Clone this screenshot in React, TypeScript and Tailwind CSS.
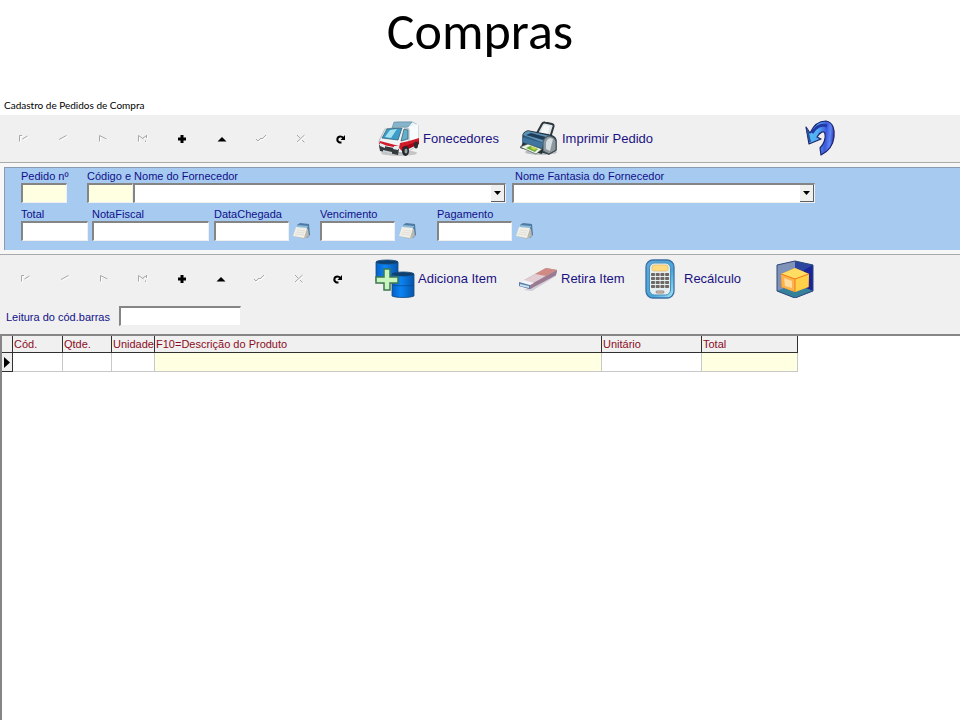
import type { ReactNode } from "react";

const navGlyphs: { name: string; enabled: boolean; art: ReactNode }[] = [
  { name: "Primeiro", enabled: false, art: <path d="M4.500 9.500V3.500H7M7.500 7l5-3" /> },
  { name: "Anterior", enabled: false, art: <path d="M5 7.500l7.500-4" /> },
  { name: "Próximo", enabled: false, art: <path d="M5.500 9.500V3.500l7 3.500" /> },
  { name: "Último", enabled: false, art: <path d="M4.500 9.500V3.500l5 3.500M12.500 3v3M9 6l3-2M11.500 8.500v1.500" /> },
  {
    name: "Inserir",
    enabled: true,
    art: <path d="M9 3v8M5 7h8" stroke="#000" strokeWidth="3" />,
  },
  { name: "Editar", enabled: true, art: <path d="M4.500 9.500L9 5l4.500 4.500z" fill="#000" stroke="none" /> },
  { name: "Gravar", enabled: false, art: <path d="M3 7l2 2 3-3 1 1 4-4" /> },
  { name: "Cancelar", enabled: false, art: <path d="M5 3l3 3M10 8l2.500 2.500M12.500 3L5 10" /> },
  {
    name: "Atualizar",
    enabled: true,
    art: (
      <g>
        <path d="M9.500 10.500H7.500C4 9 5 4.500 8.500 4.500c1.500 0 2.500.8 3 2" stroke="#000" strokeWidth="2" />
        <path d="M13 3v5H8.500z" fill="#000" stroke="none" />
      </g>
    ),
  },
];

function Navigator({ size, label }: { size: string; label: string }) {
  return (
    <div role="toolbar" aria-label={label} className={`grid shrink-0 grid-cols-9 ${size}`}>
      {navGlyphs.map((g) => (
        <button
          key={g.name}
          type="button"
          aria-label={g.name}
          disabled={!g.enabled}
          className="flex h-6 items-center justify-center"
        >
          <svg width="16" height="14" viewBox="0 0 16 14" fill="none">
            {!g.enabled && (
              <g stroke="#ffffff" transform="translate(1 1)">
                {g.art}
              </g>
            )}
            <g stroke="#a8a8a8">{g.art}</g>
          </svg>
        </button>
      ))}
    </div>
  );
}

function AmbulanceIcon() {
  return (
    <svg width="42" height="36" viewBox="0 0 42 36">
      <ellipse cx="21" cy="32" rx="18" ry="3" fill="#c4c4c4" />
      <path d="M16 4l3-3h16l5 3v20l-9 6-8-8z" fill="#e9f2f7" stroke="#8fa7b3" strokeWidth=".6" />
      <path d="M14 7l2-6h18l-4 5z" fill="#86b4ca" stroke="#5d8ba3" strokeWidth=".6" />
      <path d="M31 6l9-3v18l-9 4z" fill="#f8fbfd" />
      <path d="M7 8l17-2 7 2v18l-7 6L2 28l-1-8z" fill="#f0f4f6" stroke="#8296a1" strokeWidth=".6" />
      <path d="M9 8l15-1-4 12-16-2z" fill="#3d9dc8" stroke="#2b5468" strokeWidth=".7" />
      <path d="M12 9l7-1-6 9-6-1z" fill="#a2e2f3" />
      <path d="M26 8l4 1v9l-7 2z" fill="#63afca" stroke="#36566a" strokeWidth=".7" />
      <path d="M22 22l9-2 10-3v6l-17 7-3-3z" fill="#cf1b2a" />
      <path d="M2 20l19 5-1 2-19-4z" fill="#cf1b2a" />
      <path d="M24 26l17-6v3l-17 8z" fill="#a30618" />
      <path d="M1 24l20 4-1 6-18-4z" fill="#363a3d" />
      <path d="M2 22l5 2v3l-5-2zM16 25h5l-1 4-5-1z" fill="#e2f0f4" />
      <path d="M5 29l9 2v2l-9-2z" fill="#c9d4d8" />
      <ellipse cx="27.500" cy="30" rx="3.500" ry="5" fill="#25282a" />
      <ellipse cx="28" cy="30" rx="1.500" ry="2.500" fill="#9aa1a5" />
      <ellipse cx="38" cy="24" rx="2" ry="3.500" fill="#2b2d30" />
    </svg>
  );
}

function PrinterIcon() {
  return (
    <svg width="40" height="36" viewBox="0 0 40 36">
      <ellipse cx="22" cy="31" rx="16" ry="3" fill="#b8bec0" />
      <path d="M17 14l6-11q1-2 3-1.500l7 1.500q2 .5 1.500 2.500L31 17z" fill="#dfe5e8" stroke="#2d363b" strokeWidth="2" strokeLinejoin="round" />
      <path d="M21 13l4-9 6 1-3 9z" fill="#f4f7f8" />
      <path d="M4 14q1-3 5-4l21 4q6 1 7 5v10l-7 4-26-8z" fill="#2f5878" stroke="#22343f" strokeWidth="1.300" />
      <path d="M4 14q1-3 5-4l22 5-6 7z" fill="#5d92b8" />
      <path d="M7 14l5-2 15 4-3 3z" fill="#1f3c59" />
      <path d="M24 21q2-6 7-6 5 1 6 5v9l-7 4-6-3z" fill="#8d999f" stroke="#454f54" />
      <path d="M27 21q1-3 4-4l3 1-3 12-4-2z" fill="#d5dee2" />
      <path d="M3 16l21 6-1 5L3 21z" fill="#3f759f" />
      <path d="M4 22l20 6-1 5L1 27z" fill="#25302e" />
      <path d="M1 26l8-3 14 5-6 5z" fill="#eff5ee" stroke="#4b5a50" strokeWidth=".7" />
      <path d="M7 27l4-2 8 3-3 3z" fill="#6eae2e" />
      <path d="M11 27l3-1 4 2-3 1z" fill="#c5db48" />
    </svg>
  );
}

function UndoIcon() {
  return (
    <svg width="32" height="38" viewBox="0 0 32 38">
      <defs>
        <linearGradient id="undo" x1="0" y1=".4" x2="1" y2=".5">
          <stop offset="0" stopColor="#4fbdf5" />
          <stop offset=".4" stopColor="#52aef4" />
          <stop offset=".7" stopColor="#3b58dc" />
          <stop offset=".85" stopColor="#5f86f5" />
          <stop offset="1" stopColor="#2a2fa0" />
        </linearGradient>
      </defs>
      <path
        d="M2 7l4 6C10 4 16 1 22 1c7 1 9 9 8 16-1 9-5 14-13 18l-1-7c4-4 6-10 5-14-1-4-5-2-8 3l4 2-12 5z"
        fill="url(#undo)"
        stroke="#20236e"
        strokeWidth="1.200"
        strokeLinejoin="round"
      />
      <path d="M8 13C12 6 18 4 23 6" fill="none" stroke="#2438a6" strokeWidth="3" />
      <path d="M3 9l3 13" stroke="#2a4f96" strokeWidth="2" />
    </svg>
  );
}

function AddIcon() {
  return (
    <svg width="40" height="40" viewBox="0 0 40 40">
      <defs>
        <linearGradient id="cylinder">
          <stop offset="0" stopColor="#0560c4" />
          <stop offset=".4" stopColor="#0c84f5" />
          <stop offset="1" stopColor="#0655aa" />
        </linearGradient>
      </defs>
      <g stroke="#164979" strokeWidth=".8">
        <path d="M1 3v19c4 3 17 3 22 0V3z" fill="url(#cylinder)" />
        <ellipse cx="12" cy="3" rx="11" ry="2" fill="#0d3f70" />
        <path d="M17 15v22c4 2 18 2 22 0V15z" fill="url(#cylinder)" />
        <ellipse cx="28" cy="15" rx="11" ry="2" fill="#0d3f70" />
        <path d="M17 26c4 1 18 1 22 0" fill="none" stroke="#064c91" />
      </g>
      <path d="M9 10h6v8h8v6h-8v7H9v-7H1v-6h8z" fill="#c8f5bd" stroke="#3f7751" strokeWidth="1.500" />
    </svg>
  );
}

function EraserIcon() {
  return (
    <svg width="40" height="26" viewBox="0 0 40 26">
      <path d="M6 24l8 1 24-15v-3z" fill="#d3cdd6" />
      <path d="M1 17L28 2l11 2-1 5-26 14-11-3z" fill="#8f86a3" />
      <path d="M1 17L28 2l11 2-27 15z" fill="#e3cdd3" />
      <path d="M17 8l11-6 11 2-11 6z" fill="#cf8a84" />
      <path d="M12 19L39 4l-1 5-26 14z" fill="#9b7b92" />
      <path d="M1 16l11 3v4L1 20z" fill="#577fa7" />
      <path d="M2 16l4-2 10 3-4 2z" fill="#f0f5f9" />
      <path d="M2 18l9 2v2l-9-2z" fill="#c9e0ee" />
    </svg>
  );
}

function CalculatorIcon() {
  return (
    <svg width="30" height="40" viewBox="0 0 30 40">
      <defs>
        <linearGradient id="calc" x1="0" y1="0" x2="1" y2="1">
          <stop offset="0" stopColor="#5fa8dc" />
          <stop offset=".6" stopColor="#48a6d8" />
          <stop offset="1" stopColor="#a8ebfa" />
        </linearGradient>
      </defs>
      <rect x="1" y="1" width="28" height="38" rx="7" fill="url(#calc)" stroke="#3b6fa5" strokeWidth="1.300" />
      <rect x="4.500" y="4" width="21" height="32" rx="5" fill="#e4eef0" stroke="#4a8fb8" />
      <rect x="7" y="6" width="16" height="6" rx="2" fill="#ffdc82" stroke="#e0ae60" strokeWidth=".6" />
      {[14, 18, 22, 26].map((y) => (
        <g key={y} fill="#6e6764">
          <rect x="6" y={y} width="4" height="3" rx=".8" />
          <rect x="10.700" y={y} width="4" height="3" rx=".8" />
          <rect x="15.400" y={y} width="4" height="3" rx=".8" />
          <rect x="20.100" y={y} width="4" height="3" rx=".8" />
        </g>
      ))}
      <rect x="11" y="32" width="8" height="2" rx="1" fill="#e3d1c8" stroke="#806d68" strokeWidth=".8" />
    </svg>
  );
}

function CubeIcon() {
  return (
    <svg width="38" height="38" viewBox="0 0 38 38">
      <path d="M1 5l18-4 18 4v26l-18 7-18-7z" fill="#526fae" />
      <path d="M1 5l18-4v23L1 31z" fill="#7f93b8" />
      <path d="M19 1l18 4v26l-18-7z" fill="#2a45a0" />
      <path d="M28 10l9-5v26l-9-4z" fill="#18259a" />
      <path d="M1 31l18-7 18 7-18 7z" fill="#35809a" />
      <path d="M1 5l18-4 18 4v26l-18 7-18-7z" fill="none" stroke="#30497b" strokeWidth="1" />
      <path d="M5 14l14-6 14 6v13l-14 5-14-5z" fill="#f28e19" />
      <path d="M5 14l14-6 14 6-14 5z" fill="#ffdc62" />
      <path d="M5 14l14 5v13L6 27z" fill="#ffb24a" />
      <path d="M19 19l14-5-1 13-13 5z" fill="#ffd04a" />
      <path d="M5 14l14 5 14-5M19 19v13" fill="none" stroke="#f07a18" />
      <path d="M8 18l8 3v7l-7-2z" fill="#ffdca0" />
    </svg>
  );
}

function CalendarButton({ label }: { label: string }) {
  return (
    <button type="button" aria-label={label} className="flex h-5 w-5 shrink-0 items-center justify-center">
      <svg width="20" height="18" viewBox="0 0 20 18">
        <path d="M5 3l3-2 9 1 1 11-3 3z" fill="#4f7ba3" />
        <path d="M6 3l10 1-1 3L5 6z" fill="#8dbbd8" />
        <path d="M4 6l12 1 1 7-5 3-11-3z" fill="#b9b9b0" />
        <path d="M4 5l11 1-3 10-11-2z" fill="#f1f0e8" />
        <path d="M5 8l8 1M4 10l8 1M3 12l9 1" stroke="#dcdcd4" strokeWidth=".8" />
      </svg>
    </button>
  );
}

function ToolButton({ icon, children, size }: { icon: ReactNode; children: string; size: string }) {
  return (
    <button
      type="button"
      className={`flex h-10 shrink-0 items-center whitespace-nowrap text-left text-[13px] leading-4 text-[#1b1282] ${size}`}
    >
      {icon}
      <span>{children}</span>
    </button>
  );
}

const sunken = "h-5 border-t-2 border-l-2 border-r border-b border-t-[#858585] border-l-[#858585] border-r-[#f0f0f0] border-b-[#f0f0f0] px-1 outline-none";

function Field({ id, label, size }: { id: string; label: string; size: string }) {
  return (
    <div className={`shrink-0 ${size}`}>
      <label htmlFor={id} className="block h-[14px] whitespace-nowrap leading-[14px]">
        {label}
      </label>
      <input id={id} type="text" className={`block w-full bg-white ${sunken}`} />
    </div>
  );
}

function Combo({ id, label }: { id: string; label?: string }) {
  return (
    <div className="relative">
      <select id={id} aria-label={label} className={`block w-full appearance-none bg-white ${sunken}`}>
        <option value=""></option>
      </select>
      <span className="pointer-events-none absolute right-px top-0.5 flex h-[17px] w-[14px] items-center justify-center border-r border-b border-[#606060] bg-[#f0f0f0]">
        <svg width="7" height="4" viewBox="0 0 7 4">
          <path d="M0 0h7L3.500 4z" fill="#000" />
        </svg>
      </span>
    </div>
  );
}

const columns = [
  { title: "Cód.", size: "w-[50px]", cell: "bg-white" },
  { title: "Qtde.", size: "w-[49px]", cell: "bg-white" },
  { title: "Unidade", size: "w-[43px]", cell: "bg-white" },
  { title: "F10=Descrição do Produto", size: "w-[447px]", cell: "bg-[#ffffe1]" },
  { title: "Unitário", size: "w-[100px]", cell: "bg-white" },
  { title: "Total", size: "w-[96px]", cell: "bg-[#ffffe1]" },
];

export default function App() {
  return (
    <div className="flex min-h-screen flex-col overflow-x-hidden bg-white font-['Liberation_Sans',Arial,sans-serif] text-[11px] text-[#10108a]">
      <h1 className="h-[95px] pt-[3px] text-center font-['Carlito',Lato,sans-serif] text-[52px] leading-[56px] text-black">
        Compras
      </h1>
      <main className="flex flex-1 flex-col">
        <h2 className="h-5 pl-1 font-['Lato',sans-serif] text-[10px] leading-5 text-black">
          Cadastro de Pedidos de Compra
        </h2>

        <div className="flex h-12 items-center border-b border-[#a9a9a9] bg-[#f0f0f0] pl-[3px]">
          <Navigator size="w-[357px]" label="Navegação de pedidos" />
          <div className="flex items-center pl-[18px] pt-px">
            <ToolButton icon={<AmbulanceIcon />} size="w-[141px] gap-[3px]">Fonecedores</ToolButton>
            <ToolButton icon={<PrinterIcon />} size="w-[285px] gap-[3px]">Imprimir Pedido</ToolButton>
            <button type="button" aria-label="Voltar">
              <UndoIcon />
            </button>
          </div>
        </div>

        <section className="border-b border-[#a9a9a9] bg-[#f7f7f7] pt-1 pb-1 pl-1">
          <form className="h-[83px] border-t border-l border-[#8a9bb0] bg-[#a6caf0] pt-px pl-4">
            <div className="flex">
              <div className="mr-5 w-[46px] shrink-0">
                <label htmlFor="pedido" className="block h-[14px] whitespace-nowrap leading-[14px]">Pedido nº</label>
                <input id="pedido" type="text" className={`block w-full bg-[#ffffe1] ${sunken}`} />
              </div>
              <div className="mr-[6px] w-[419px] shrink-0">
                <label htmlFor="codigo" className="block h-[14px] leading-[14px]">Código e Nome do Fornecedor</label>
                <div className="flex">
                  <input id="codigo" type="text" className={`block w-[46px] bg-[#ffffe1] ${sunken}`} />
                  <div className="flex-1">
                    <Combo id="nome" label="Nome do Fornecedor" />
                  </div>
                </div>
              </div>
              <div className="w-[303px] shrink-0">
                <label htmlFor="fantasia" className="block h-[14px] pl-[3px] leading-[14px]">Nome Fantasia do Fornecedor</label>
                <Combo id="fantasia" />
              </div>
            </div>
            <div className="flex items-end pt-1">
              <Field id="total" label="Total" size="mr-1 w-[67px]" />
              <Field id="nota" label="NotaFiscal" size="mr-[5px] w-[117px]" />
              <Field id="chegada" label="DataChegada" size="mr-[3px] w-[75px]" />
              <CalendarButton label="Escolher data de chegada" />
              <Field id="vencimento" label="Vencimento" size="ml-2 mr-[3px] w-[75px]" />
              <CalendarButton label="Escolher vencimento" />
              <Field id="pagamento" label="Pagamento" size="ml-[19px] mr-[3px] w-[75px]" />
              <CalendarButton label="Escolher pagamento" />
            </div>
          </form>
        </section>

        <section className="h-[79px] bg-[#f0f0f0]">
          <div className="flex h-12 items-center pl-[5px]">
            <Navigator size="w-[351px]" label="Navegação de itens" />
            <div className="flex items-center pl-[19px]">
              <ToolButton icon={<AddIcon />} size="w-[143px] gap-[3px]">Adiciona Item</ToolButton>
              <ToolButton icon={<EraserIcon />} size="w-[127px] gap-[3px]">Retira Item</ToolButton>
              <ToolButton icon={<CalculatorIcon />} size="w-[131px] gap-[9px]">Recálculo</ToolButton>
              <button type="button" aria-label="Produtos">
                <CubeIcon />
              </button>
            </div>
          </div>
          <div className="flex items-start pl-[6px] pt-[3px]">
            <label htmlFor="barras" className="w-[113px] pt-1 leading-[14px]">Leitura do cód.barras</label>
            <input id="barras" type="text" className={`w-[122px] bg-white ${sunken}`} />
          </div>
        </section>

        <section className="flex-1 border-t-2 border-l-2 border-t-[#858585] border-l-[#858585] bg-white">
          <table className="w-[796px] table-fixed border-separate border-spacing-0 text-left">
            <thead>
              <tr className="h-[17px] bg-[#f0f0f0] leading-[14px] text-[#8b0d1d]">
                <th aria-label="Linha atual" className="w-[11px] border-r border-b border-[#303030] p-0" />
                {columns.map((c) => (
                  <th
                    key={c.title}
                    scope="col"
                    className={`whitespace-nowrap border-r border-b border-[#303030] p-0 pl-px font-normal ${c.size}`}
                  >
                    {c.title}
                  </th>
                ))}
              </tr>
            </thead>
            <tbody>
              <tr className="h-[19px]">
                <td className="border-r border-b border-[#303030] bg-[#f0f0f0] p-0">
                  <svg width="8" height="11" viewBox="0 0 8 11" className="block">
                    <path d="M2 0l6 5.500L2 11z" fill="#000" />
                  </svg>
                </td>
                {columns.map((c) => (
                  <td key={c.title} className={`border-r border-b border-[#c8c8c8] p-0 ${c.cell}`} />
                ))}
              </tr>
            </tbody>
          </table>
        </section>
      </main>
    </div>
  );
}
